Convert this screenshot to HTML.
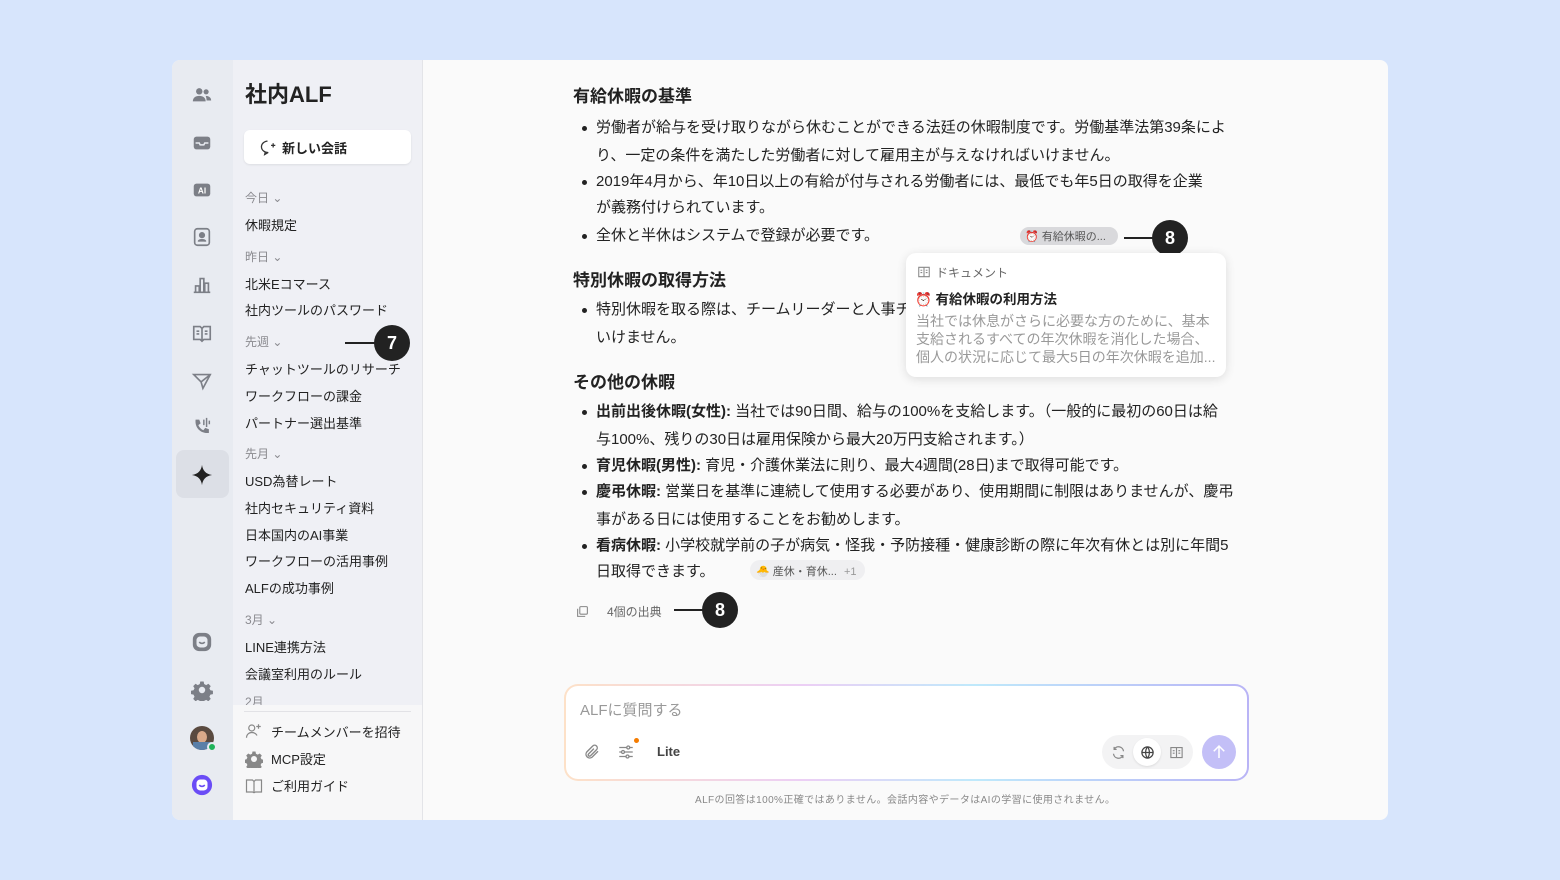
<!DOCTYPE html>
<html><head><meta charset="utf-8"><style>
*{margin:0;padding:0;box-sizing:border-box}
body{width:1560px;height:880px;background:#d7e5fc;font-family:"Liberation Sans","Noto Sans CJK JP",sans-serif;color:#222;position:relative;overflow:hidden}
.card{position:absolute;left:172px;top:60px;width:1216px;height:760px;border-radius:8px;overflow:hidden;background:#fafafa}
.rail{position:absolute;left:0;top:0;width:61px;height:760px;background:#e8ebf1}
.side{position:absolute;left:61px;top:0;width:190px;height:760px;background:#eff0f5;border-right:1px solid #e3e4e8}
.a{position:absolute;white-space:nowrap}
.s{font-size:13px;color:#222}
.g{font-size:12px;color:#8a8a8f}
.m{font-size:15px;line-height:22px;color:#222}
.h{font-size:17px;font-weight:bold;color:#222}
.dot{position:absolute;width:5px;height:5px;border-radius:50%;background:#222}
.badge{position:absolute;width:36px;height:36px;border-radius:50%;background:#222;color:#fff;font-weight:bold;font-size:18px;text-align:center;line-height:36px}
.line{position:absolute;height:2px;background:#222}
.ic{position:absolute;left:19px;width:22px;height:22px}
.mt{position:absolute;left:0;top:2px;width:100%;height:100%}
.sl{position:absolute;left:0;top:-2px;width:100%;height:640px}
</style></head><body>
<div class="card">
<div class="rail">
<svg class="ic" style="top:24px" viewBox="0 0 24 24" fill="#7c7f87"><circle cx="9" cy="8" r="3.5"/><circle cx="16.5" cy="8.5" r="2.8"/><path d="M2 19c0-4 3-6 7-6s7 2 7 6z"/><path d="M16 13c3 0 6 1.5 6 5h-5c0-2-.5-3.5-1-5z"/></svg>
<svg class="ic" style="top:72px" viewBox="0 0 24 24" fill="#7c7f87"><rect x="3" y="5" width="18" height="14" rx="3"/><path d="M5 12h4l1 2h4l1-2h4" stroke="#e8ebf1" stroke-width="1.6" fill="none"/></svg>
<svg class="ic" style="top:119px" viewBox="0 0 24 24"><rect x="3" y="5" width="18" height="14" rx="3" fill="#7c7f87"/><text x="12" y="16" font-size="9" font-weight="bold" fill="#fff" text-anchor="middle" font-family="Liberation Sans">AI</text></svg>
<svg class="ic" style="top:166px" viewBox="0 0 24 24" fill="none" stroke="#7c7f87" stroke-width="1.8"><rect x="4" y="3" width="16" height="18" rx="3"/><circle cx="12" cy="10" r="2.5" fill="#7c7f87"/><path d="M8 17c1-2.5 7-2.5 8 0" fill="#7c7f87"/></svg>
<svg class="ic" style="top:214px" viewBox="0 0 24 24" fill="none" stroke="#7c7f87" stroke-width="1.8"><path d="M3 20h18M5 20v-7h4v7M10 20V5h4v15M15 20v-10h4v10"/></svg>
<svg class="ic" style="top:262px" viewBox="0 0 24 24" fill="none" stroke="#7c7f87" stroke-width="1.8"><path d="M3 5h7l2 2 2-2h7v14h-7l-2 2-2-2H3z M12 7v13"/><path d="M6 10h3M6 13h3M15 10h3M15 13h3"/></svg>
<svg class="ic" style="top:310px" viewBox="0 0 24 24" fill="none" stroke="#7c7f87" stroke-width="1.8"><path d="M3 5l18 0-8 15-2-7z M11 13l10-8"/></svg>
<svg class="ic" style="top:356px" viewBox="0 0 24 24" fill="#7c7f87"><path d="M5 4l4 0 1.5 4-2.5 2c1 2.5 3 4.5 5.5 5.5l2-2.5 4 1.5v4c-9 1-15.5-5.5-14.5-14.5z"/><path d="M14 4v6M17 2v10M20 5v4" stroke="#7c7f87" stroke-width="1.6"/></svg>
<div style="position:absolute;left:4px;top:390px;width:53px;height:48px;border-radius:8px;background:#dcdfe6"></div>
<svg class="ic" style="top:404px" viewBox="0 0 24 24" fill="#222"><path d="M12 1c.8 6 4 10 11 11-7 1-10.2 5-11 11-.8-6-4-10-11-11 7-1 10.2-5 11-11z"/></svg>
<svg class="ic" style="top:571px" viewBox="0 0 24 24"><rect x="2" y="2" width="20" height="20" rx="7" fill="#7c7f87"/><rect x="6" y="6" width="12" height="12" rx="4" fill="#e8ebf1"/><path d="M9 12c1.5 2 4.5 2 6 0" stroke="#7c7f87" stroke-width="1.6" fill="none"/></svg>
<svg class="ic" style="top:619px" viewBox="0 0 24 24" fill="#7c7f87"><path d="M10 2h4l.6 3 2.4 1.2 2.6-1.6 2.8 2.8-1.6 2.6 1.2 2.4 3 .6v4l-3 .6-1.2 2.4 1.6 2.6-2.8 2.8-2.6-1.6-2.4 1.2-.6 3h-4l-.6-3-2.4-1.2-2.6 1.6-2.8-2.8 1.6-2.6-1.2-2.4-3-.6v-4l3-.6 1.2-2.4-1.6-2.6 2.8-2.8 2.6 1.6 2.4-1.2z" transform="scale(.92) translate(1 1)"/><circle cx="12" cy="12" r="3.5" fill="#e8ebf1"/></svg>
<div style="position:absolute;left:18px;top:666px;width:24px;height:24px;border-radius:50%;background:#5a4a40;overflow:hidden"><div style="position:absolute;left:7px;top:5px;width:10px;height:12px;border-radius:50%;background:#d9a98a"></div><div style="position:absolute;left:3px;top:16px;width:18px;height:10px;background:#5a7fa8"></div></div>
<div style="position:absolute;left:35px;top:682px;width:10px;height:10px;border-radius:50%;background:#1fb35a;border:2px solid #e8ebf1"></div>
<svg class="ic" style="top:714px" viewBox="0 0 24 24"><circle cx="12" cy="12" r="11" fill="#6a4cf6"/><rect x="6" y="6" width="12" height="12" rx="4" fill="#fff"/><path d="M9 12c1.5 2 4.5 2 6 0" stroke="#6a4cf6" stroke-width="1.6" fill="none"/></svg>
</div>
<div class="side">
<div class="a" style="left:12px;top:17px;font-size:22px;font-weight:bold;color:#222">社内ALF</div>
<div style="position:absolute;left:11px;top:70px;width:167px;height:34px;background:#fff;border-radius:6px;box-shadow:0 1px 2px rgba(0,0,0,.08)"></div>
<svg style="position:absolute;left:26px;top:79px" width="17" height="17" viewBox="0 0 24 24" fill="none" stroke="#333" stroke-width="1.8"><path d="M12 3a9 8 0 1 0 1 16l-5 3 1-4"/><path d="M17 9h6M20 6v6"/></svg>
<div class="a" style="left:49px;top:78px;font-size:13px;font-weight:bold">新しい会話</div>
<div class="sl">
<div class="a g" style="left:12px;top:131px">今日 ⌄</div>
<div class="a s" style="left:12px;top:157px">休暇規定</div>
<div class="a g" style="left:12px;top:190px">昨日 ⌄</div>
<div class="a s" style="left:12px;top:216px">北米Eコマース</div>
<div class="a s" style="left:12px;top:242px">社内ツールのパスワード</div>
<div class="a g" style="left:12px;top:275px">先週 ⌄</div>
<div class="a s" style="left:12px;top:301px">チャットツールのリサーチ</div>
<div class="a s" style="left:12px;top:328px">ワークフローの課金</div>
<div class="a s" style="left:12px;top:355px">パートナー選出基準</div>
<div class="a g" style="left:12px;top:387px">先月 ⌄</div>
<div class="a s" style="left:12px;top:413px">USD為替レート</div>
<div class="a s" style="left:12px;top:440px">社内セキュリティ資料</div>
<div class="a s" style="left:12px;top:467px">日本国内のAI事業</div>
<div class="a s" style="left:12px;top:493px">ワークフローの活用事例</div>
<div class="a s" style="left:12px;top:520px">ALFの成功事例</div>
<div class="a g" style="left:12px;top:553px">3月 ⌄</div>
<div class="a s" style="left:12px;top:579px">LINE連携方法</div>
<div class="a s" style="left:12px;top:606px">会議室利用のルール</div>
<div class="a g" style="left:12px;top:635px">2月</div>
</div>
<div style="position:absolute;left:0;top:645px;width:189px;height:115px;background:#f7f7f8"></div>
<div style="position:absolute;left:11px;top:651px;width:167px;height:1px;background:#e2e2e6"></div>
<svg style="position:absolute;left:12px;top:662px" width="18" height="18" viewBox="0 0 24 24" fill="none" stroke="#888" stroke-width="1.6"><circle cx="9" cy="8" r="4"/><path d="M2 21c0-4 3-7 7-7s6 2 7 4M18 3v6M15 6h6"/></svg>
<div class="a s" style="left:38px;top:662px">チームメンバーを招待</div>
<svg style="position:absolute;left:12px;top:690px" width="18" height="18" viewBox="0 0 24 24" fill="#888"><path d="M10 2h4l.6 3 2.4 1.2 2.6-1.6 2.8 2.8-1.6 2.6 1.2 2.4 3 .6v4l-3 .6-1.2 2.4 1.6 2.6-2.8 2.8-2.6-1.6-2.4 1.2-.6 3h-4l-.6-3-2.4-1.2-2.6 1.6-2.8-2.8 1.6-2.6-1.2-2.4-3-.6v-4l3-.6 1.2-2.4-1.6-2.6 2.8-2.8 2.6 1.6 2.4-1.2z"/><circle cx="12" cy="12" r="4" fill="#f7f7f8"/></svg>
<div class="a s" style="left:38px;top:689px">MCP設定</div>
<svg style="position:absolute;left:12px;top:717px" width="18" height="18" viewBox="0 0 24 24" fill="none" stroke="#888" stroke-width="1.6"><path d="M2 4h8l2 2 2-2h8v16h-8l-2 1-2-1H2zM12 6v15"/></svg>
<div class="a s" style="left:38px;top:716px">ご利用ガイド</div>
<div class="line" style="left:112px;top:282px;width:30px"></div>
<div class="badge" style="left:141px;top:265px">7</div>
</div>

<div class="mt">
<div class="a h" style="left:401px;top:20px">有給休暇の基準</div>
<div class="dot" style="left:410px;top:64px"></div>
<div class="a m" style="left:424px;top:55px">労働者が給与を受け取りながら休むことができる法廷の休暇制度です。労働基準法第39条によ</div>
<div class="a m" style="left:424px;top:83px">り、一定の条件を満たした労働者に対して雇用主が与えなければいけません。</div>
<div class="dot" style="left:410px;top:118px"></div>
<div class="a m" style="left:424px;top:109px">2019年4月から、年10日以上の有給が付与される労働者には、最低でも年5日の取得を企業</div>
<div class="a m" style="left:424px;top:135px">が義務付けられています。</div>
<div class="dot" style="left:410px;top:172px"></div>
<div class="a m" style="left:424px;top:163px">全休と半休はシステムで登録が必要です。</div>
<div class="a h" style="left:401px;top:204px">特別休暇の取得方法</div>
<div class="dot" style="left:410px;top:246px"></div>
<div class="a m" style="left:424px;top:237px">特別休暇を取る際は、チームリーダーと人事チ</div>
<div class="a m" style="left:424px;top:265px">いけません。</div>
<div class="a h" style="left:401px;top:306px">その他の休暇</div>
<div class="dot" style="left:410px;top:348px"></div>
<div class="a m" style="left:424px;top:339px"><b>出前出後休暇(女性):</b> 当社では90日間、給与の100%を支給します。（一般的に最初の60日は給</div>
<div class="a m" style="left:424px;top:367px">与100%、残りの30日は雇用保険から最大20万円支給されます。）</div>
<div class="dot" style="left:410px;top:402px"></div>
<div class="a m" style="left:424px;top:393px"><b>育児休暇(男性):</b> 育児・介護休業法に則り、最大4週間(28日)まで取得可能です。</div>
<div class="dot" style="left:410px;top:428px"></div>
<div class="a m" style="left:424px;top:419px"><b>慶弔休暇:</b> 営業日を基準に連続して使用する必要があり、使用期間に制限はありませんが、慶弔</div>
<div class="a m" style="left:424px;top:447px">事がある日には使用することをお勧めします。</div>
<div class="dot" style="left:410px;top:482px"></div>
<div class="a m" style="left:424px;top:473px"><b>看病休暇:</b> 小学校就学前の子が病気・怪我・予防接種・健康診断の際に年次有休とは別に年間5</div>
<div class="a m" style="left:424px;top:499px">日取得できます。</div>
</div>
<div style="position:absolute;left:848px;top:167px;width:98px;height:18px;border-radius:9px;background:#d9d9dc"></div>
<div class="a" style="left:853px;top:168px;font-size:11px;color:#555">⏰ 有給休暇の...</div>
<div class="line" style="left:952px;top:177px;width:30px"></div>
<div class="badge" style="left:980px;top:160px">8</div>

<div style="position:absolute;left:578px;top:500px;width:115px;height:20px;border-radius:10px;background:#efeff1"></div>
<div class="a" style="left:584px;top:503px;font-size:11px;color:#555">🐣 産休・育休... <span style="color:#999;margin-left:4px">+1</span></div>

<svg style="position:absolute;left:404px;top:545px" width="13" height="13" viewBox="0 0 24 24" fill="none" stroke="#888" stroke-width="2"><rect x="7" y="3" width="14" height="14" rx="2"/><path d="M3 7v14h14"/></svg>
<div class="a" style="left:435px;top:543px;font-size:12px;color:#666">4個の出典</div>
<div class="line" style="left:502px;top:549px;width:30px"></div>
<div class="badge" style="left:530px;top:532px">8</div>

<div style="position:absolute;left:734px;top:193px;width:320px;height:124px;background:#fff;border-radius:10px;box-shadow:0 2px 10px rgba(0,0,0,.12)"></div>
<svg style="position:absolute;left:745px;top:205px" width="14" height="14" viewBox="0 0 24 24" fill="none" stroke="#888" stroke-width="1.8"><path d="M3 4h18v16H3zM12 4v16M6 9h3M6 13h3M15 9h3M15 13h3"/></svg>
<div class="a" style="left:764px;top:204px;font-size:12px;color:#666">ドキュメント</div>
<div class="a" style="left:743px;top:228px;font-size:13.5px;font-weight:bold;color:#222">⏰ 有給休暇の利用方法</div>
<div class="a" style="left:744px;top:252px;font-size:14px;line-height:18px;color:#999">当社では休息がさらに必要な方のために、基本<br>支給されるすべての年次休暇を消化した場合、<br>個人の状況に応じて最大5日の年次休暇を追加...</div>

<div style="position:absolute;left:392px;top:624px;width:685px;height:97px;border-radius:14px;padding:2px;background:linear-gradient(90deg,#fde1c8,#eccff5 35%,#bfe9fb 60%,#b9b4f6)"><div style="width:100%;height:100%;background:#fff;border-radius:12px"></div></div>
<div class="a" style="left:408px;top:639px;font-size:15px;color:#999">ALFに質問する</div>
<svg style="position:absolute;left:411px;top:683px" width="18" height="18" viewBox="0 0 24 24" fill="none" stroke="#888" stroke-width="1.8"><path d="M20 11l-8 8a5 5 0 0 1-7-7l8-8a3.3 3.3 0 0 1 5 5l-8 8a1.7 1.7 0 0 1-2.5-2.5l7-7"/></svg>
<svg style="position:absolute;left:445px;top:683px" width="18" height="18" viewBox="0 0 24 24" fill="none" stroke="#888" stroke-width="1.8"><path d="M3 6h18M3 12h18M3 18h18"/><circle cx="15" cy="6" r="2" fill="#fff"/><circle cx="8" cy="12" r="2" fill="#fff"/><circle cx="14" cy="18" r="2" fill="#fff"/></svg>
<div style="position:absolute;left:462px;top:678px;width:5px;height:5px;border-radius:50%;background:#f57c00"></div>
<div class="a" style="left:485px;top:684px;font-size:13px;font-weight:bold;color:#444">Lite</div>
<div style="position:absolute;left:930px;top:675px;width:91px;height:34px;border-radius:17px;background:#f3f3f4"></div>
<div style="position:absolute;left:961px;top:678px;width:28px;height:28px;border-radius:50%;background:#fff;box-shadow:0 1px 2px rgba(0,0,0,.1)"></div>
<svg style="position:absolute;left:939px;top:685px" width="15" height="15" viewBox="0 0 24 24" fill="none" stroke="#888" stroke-width="2"><path d="M20 10a8 8 0 0 0-15-3M4 14a8 8 0 0 0 15 3M5 3v4h4M19 21v-4h-4"/></svg>
<svg style="position:absolute;left:968px;top:685px" width="15" height="15" viewBox="0 0 24 24" fill="none" stroke="#444" stroke-width="2"><circle cx="12" cy="12" r="9"/><path d="M3 12h18M12 3c-4 5-4 13 0 18M12 3c4 5 4 13 0 18"/></svg>
<svg style="position:absolute;left:997px;top:685px" width="15" height="15" viewBox="0 0 24 24" fill="none" stroke="#888" stroke-width="1.8"><path d="M3 4h18v16H3zM12 4v16M6 9h3M6 13h3M15 9h3M15 13h3"/></svg>
<div style="position:absolute;left:1030px;top:675px;width:34px;height:34px;border-radius:50%;background:#c3bff7"></div>
<svg style="position:absolute;left:1038px;top:683px" width="18" height="18" viewBox="0 0 24 24" fill="none" stroke="#fff" stroke-width="2"><path d="M12 20V4M5 11l7-7 7 7"/></svg>
<div class="a" style="left:523px;top:731px;font-size:10px;letter-spacing:.4px;color:#888">ALFの回答は100%正確ではありません。会話内容やデータはAIの学習に使用されません。</div>
</div>
</body></html>
